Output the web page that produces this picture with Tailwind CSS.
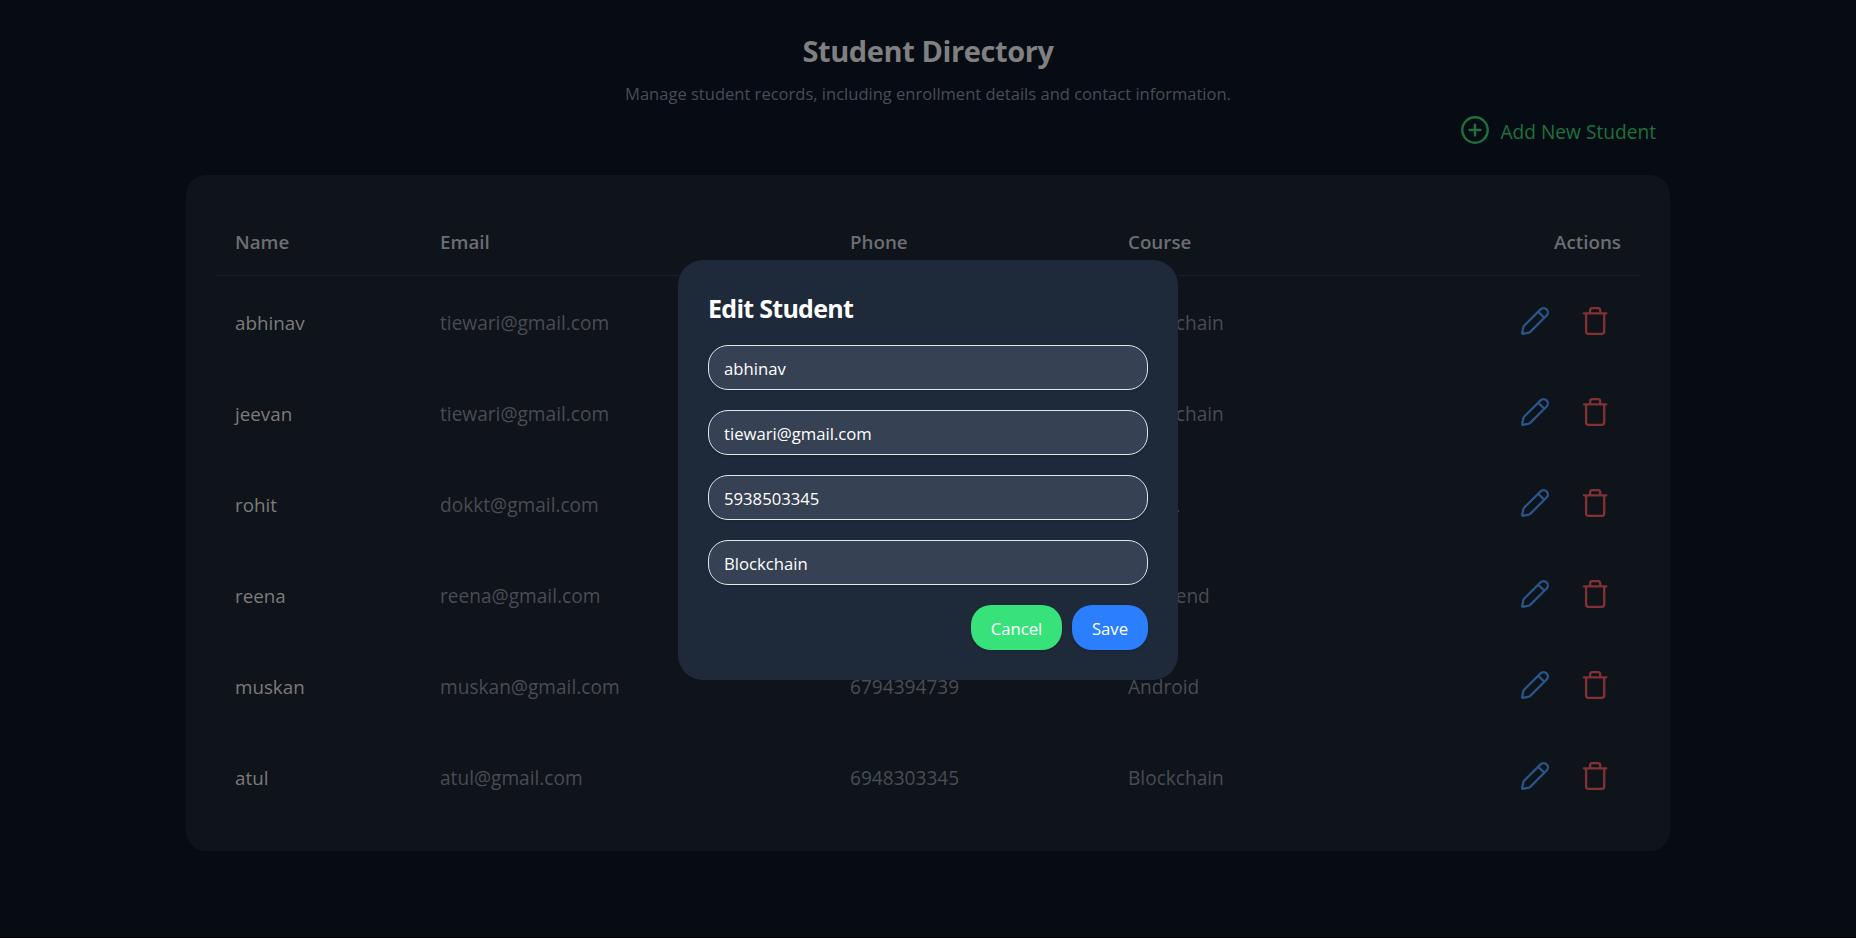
<!DOCTYPE html>
<html lang="en">
<head>
<meta charset="utf-8">
<title>Student Directory</title>
<script src="https://cdn.jsdelivr.net/npm/@tailwindcss/browser@4"></script>
</head>
<body class="h-screen overflow-hidden border-b border-black bg-[#070b13] font-['Open_Sans',sans-serif]">
<header class="flex flex-col items-center pt-[31px]">
  <h1 class="text-[29px] leading-10 font-bold tracking-[-0.41px] text-[#808080]">Student Directory</h1>
  <p class="mt-[11px] text-[16.55px] leading-6 text-[#494d55]">Manage student records, including enrollment details and contact information.</p>
</header>
<main class="mx-auto w-[1484px]">
  <div class="flex h-[69px] justify-end pt-2.5 pr-3.5">
    <button class="flex h-7 items-center gap-[11px] text-[#1d723e]">
      <svg class="size-7" viewBox="0 0 28 28" fill="none" stroke="currentColor" stroke-width="2.4" stroke-linecap="round"><circle cx="14" cy="14" r="12.7"/><path d="M8.6 14H19.4M14 8.6V19.4"/></svg>
      <span class="pt-1 text-[19.15px] leading-6">Add New Student</span>
    </button>
  </div>
  <section class="h-[676px] rounded-[20px] bg-[#0f131a] p-[30px]">
    <table class="w-full table-fixed border-separate border-spacing-0 text-left text-[19.1px] leading-6">
      <colgroup><col class="w-[205px]"><col class="w-[410px]"><col class="w-[278px]"><col class="w-[300px]"><col></colgroup>
      <thead>
        <tr class="h-[71px] text-[18.8px] text-[#6c6e71]">
          <th class="border-b border-[#1b2027] px-[19px] pt-1 font-semibold">Name</th><th class="border-b border-[#1b2027] px-[19px] pt-1 font-semibold">Email</th><th class="border-b border-[#1b2027] px-[19px] pt-1 font-semibold">Phone</th><th class="border-b border-[#1b2027] px-[19px] pt-1 font-semibold">Course</th><th class="border-b border-[#1b2027] px-[19px] pt-1 text-right font-semibold">Actions</th>
        </tr>
      </thead>
      <tbody id="rows" class="text-[#494c53]"></tbody>
    </table>
  </section>
</main>

<template id="row">
  <tr class="h-[91px]">
    <td class="px-[19px] pt-[3px] text-[18.8px] text-[#7d7c7a]"></td><td class="px-[19px] pt-[3px]"></td><td class="px-[19px] pt-[3px]"></td><td class="px-[19px] pt-[3px]"></td>
    <td class="pr-[31px] pb-px">
      <div class="flex justify-end gap-8">
        <svg class="size-7 text-[#28558a]" viewBox="0 0 28 28" fill="none" stroke="currentColor" stroke-width="2.3" stroke-linecap="round" stroke-linejoin="round"><path d="M19.56 2.36a4.3 4.3 0 0 1 6.08 6.08L9.2 24.9Q8.6 25.4 7.9 25.6L2 26.8Q1.1 26.9 1.2 26L2.4 20.1Q2.6 19.4 3.1 18.8ZM17.2 4.7l6.1 6.1"/></svg>
        <svg class="size-7 text-[#823134]" viewBox="0 0 28 28" fill="none" stroke="currentColor" stroke-width="2.3" stroke-linecap="round" stroke-linejoin="round"><path d="M2.9 6.3H25.3M5.1 6.3V24.6Q5.1 26.8 7.3 26.8H21Q23.2 26.8 23.2 24.6V6.3M9.1 6.3V3.4Q9.1 1.2 11.3 1.2H17Q19.2 1.2 19.2 3.4V6.3"/></svg>
      </div>
    </td>
  </tr>
</template>

<div class="fixed inset-0 flex items-start justify-center pt-[260px]">
  <form class="flex h-[420px] w-[500px] flex-col rounded-[25px] bg-[#1e2939] px-[30px] pt-[30px] text-[16.7px] text-white">
    <h2 class="mb-[15px] h-10 pt-px text-[25px] leading-[34px] font-bold tracking-[-0.72px]">Edit Student</h2>
    <div class="flex flex-col gap-5">
      <input class="h-[45px] rounded-[20px] border border-[#e5e5e5] bg-[#364153] px-[15px] pt-0.5 shadow-sm" value="abhinav">
      <input class="h-[45px] rounded-[20px] border border-[#e5e5e5] bg-[#364153] px-[15px] pt-0.5 shadow-sm" value="tiewari@gmail.com">
      <input class="h-[45px] rounded-[20px] border border-[#e5e5e5] bg-[#364153] px-[15px] pt-0.5 shadow-sm" value="5938503345">
      <input class="h-[45px] rounded-[20px] border border-[#e5e5e5] bg-[#364153] px-[15px] pt-0.5 shadow-sm" value="Blockchain">
      <div class="flex justify-end gap-2.5">
        <button type="button" class="h-[45px] w-[91px] rounded-[20px] bg-[#38e27b] pt-0.5 shadow-sm">Cancel</button>
        <button type="button" class="h-[45px] w-[76px] rounded-[20px] bg-[#2b7fff] pt-0.5 shadow-sm">Save</button>
      </div>
    </div>
  </form>
</div>
<script>
const students = [
  ["abhinav", "tiewari@gmail.com", "5938503345", "Blockchain"],
  ["jeevan", "tiewari@gmail.com", "5938503345", "Blockchain"],
  ["rohit", "dokkt@gmail.com", "", "AI/ML"],
  ["reena", "reena@gmail.com", "", "Frontend"],
  ["muskan", "muskan@gmail.com", "6794394739", "Android"],
  ["atul", "atul@gmail.com", "6948303345", "Blockchain"]
];
for (const s of students) {
  const r = document.getElementById("row").content.cloneNode(true);
  s.forEach((v, i) => r.querySelectorAll("td")[i].textContent = v);
  document.getElementById("rows").append(r);
}
</script>
</body>
</html>
